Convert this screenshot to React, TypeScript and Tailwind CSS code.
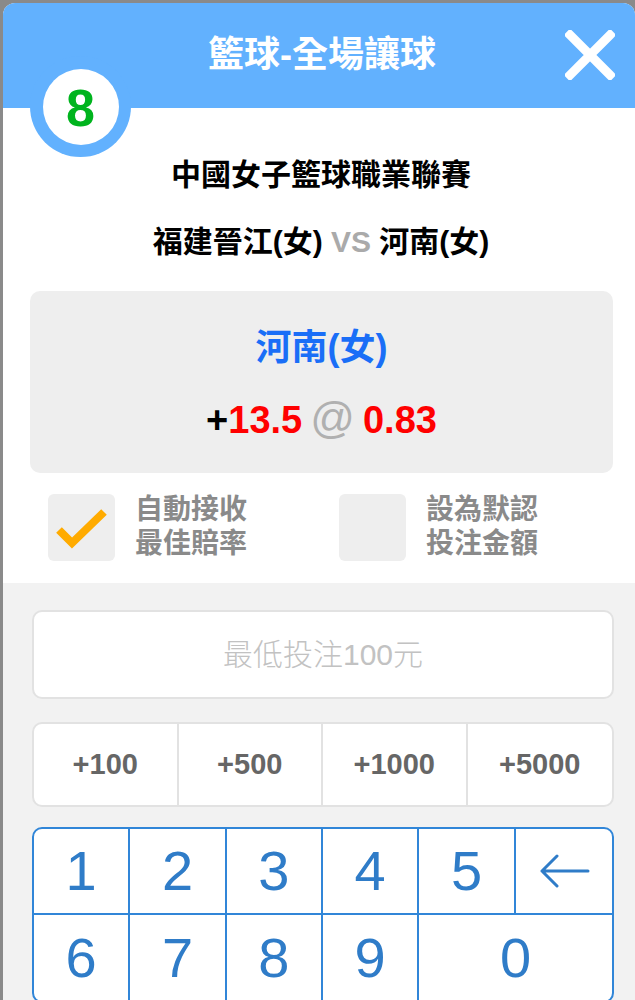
import React from "react";

const FONT = "font-['Liberation_Sans','Noto_Sans_CJK_TC',sans-serif]";

function CloseIcon() {
  return (
    <svg width="50" height="50" viewBox="0 0 50 50">
      <path d="M5 5 L45 45 M45 5 L5 45" stroke="#ffffff" strokeWidth="9" strokeLinecap="square" fill="none" />
    </svg>
  );
}

function Check() {
  return (
    <svg width="67" height="67" viewBox="0 0 67 67">
      <polyline points="11,36 24,49 56,18" stroke="#ffab00" strokeWidth="8" fill="none" strokeLinecap="butt" strokeLinejoin="miter" />
    </svg>
  );
}

function Arrow() {
  return (
    <svg width="52" height="34" viewBox="0 0 52 34">
      <path d="M4 17 H50 M19 2 L4 17 L19 32" stroke="#2f7cc8" strokeWidth="3" fill="none" strokeLinecap="round" strokeLinejoin="round" />
    </svg>
  );
}

export default function App() {
  const quick = ["+100", "+500", "+1000", "+5000"];
  return (
    <div className={`min-h-screen bg-[#8a8a8a] pl-[3px] pt-[3px] overflow-hidden ${FONT}`}>
      <div className="relative bg-white rounded-t-[12px] overflow-hidden">
        {/* Header */}
        <div className="h-[105px] bg-[#62b1fe] flex items-center justify-center pl-[6px] pb-[2px]">
          <span className="text-white text-[36px] font-bold leading-none">籃球-全場讓球</span>
        </div>
        <div className="absolute right-[20px] top-[27px]">
          <CloseIcon />
        </div>
        <div className="absolute left-[27px] top-[53px] w-[101px] h-[101px] rounded-full bg-[#62b1fe] flex items-center justify-center">
          <div className="w-[76px] h-[76px] rounded-full bg-white flex items-center justify-center">
            <span className="text-[#00b41e] text-[52px] font-bold leading-none pt-[2px]">8</span>
          </div>
        </div>

        {/* Match info */}
        <div className="pt-[49px] flex flex-col items-center pl-[4px]">
          <div className="text-[30px] leading-[36px] font-bold text-black">中國女子籃球職業聯賽</div>
          <div className="mt-[31px] text-[30px] leading-[36px] font-bold text-black">
            福建晉江(女) <span className="text-[#aaaaaa]">VS</span> 河南(女)
          </div>
        </div>

        {/* Selection box */}
        <div className="ml-[27px] w-[583px] h-[182px] mt-[31px] bg-[#eeeeee] rounded-[10px] flex flex-col items-center pt-[35px]">
          <div className="text-[36px] leading-[44px] font-bold text-[#1a6ef7]">河南(女)</div>
          <div className="mt-[26px] text-[38px] leading-[44px] font-bold flex items-baseline">
            <span className="text-black">+</span>
            <span className="text-[#ff0000]">13.5</span>
            <span className="text-[#b0b0b0] font-normal text-[44px] mx-[8px]">@</span>
            <span className="text-[#ff0000]">0.83</span>
          </div>
        </div>

        {/* Checkboxes */}
        <div className="ml-[45px] mt-[20px] pb-[22px] flex">
          <div className="w-[291px] flex items-center gap-[20px]">
            <div className="w-[67px] h-[67px] rounded-[6px] bg-[#eeeeee]">
              <Check />
            </div>
            <div className="text-[28px] leading-[34px] font-bold text-[#8a8a8a]">
              <div>自動接收</div>
              <div>最佳賠率</div>
            </div>
          </div>
          <div className="w-[291px] flex items-center gap-[20px]">
            <div className="w-[67px] h-[67px] rounded-[6px] bg-[#eeeeee]" />
            <div className="text-[28px] leading-[34px] font-bold text-[#8a8a8a]">
              <div>設為默認</div>
              <div>投注金額</div>
            </div>
          </div>
        </div>

        {/* Bottom area */}
        <div className="bg-[#f2f2f2] pt-[27px] pb-[40px] pl-[29px]">
          <div className="w-[582px] h-[89px] bg-white border-2 border-[#e2e2e2] rounded-[10px] flex items-center justify-center">
            <span className="text-[30px] font-light text-[#c2c2c2]">最低投注100元</span>
          </div>

          <div className="mt-[23px] w-[582px] h-[85px] bg-white border-2 border-[#e2e2e2] rounded-[10px] grid grid-cols-4 overflow-hidden">
            {quick.map((q, i) => (
              <div
                key={q}
                className={`flex items-center justify-center text-[29px] font-bold text-[#666666] ${i < 3 ? "border-r-2 border-[#e2e2e2]" : ""}`}
              >
                {q}
              </div>
            ))}
          </div>

          <div className="mt-[20px] w-[582px] bg-white border-2 border-[#3186d8] rounded-[10px] grid grid-cols-6 overflow-hidden">
            {["1", "2", "3", "4", "5"].map((d) => (
              <div key={d} className="h-[86px] flex items-center justify-center border-r-2 border-b-2 border-[#3186d8] text-[56px] text-[#2f7cc8] leading-none">
                {d}
              </div>
            ))}
            <div className="h-[86px] flex items-center justify-center border-b-2 border-[#3186d8]">
              <Arrow />
            </div>
            {["6", "7", "8", "9"].map((d) => (
              <div key={d} className="h-[86px] flex items-center justify-center border-r-2 border-[#3186d8] text-[56px] text-[#2f7cc8] leading-none">
                {d}
              </div>
            ))}
            <div className="col-span-2 h-[86px] flex items-center justify-center text-[56px] text-[#2f7cc8] leading-none">
              0
            </div>
          </div>
        </div>
      </div>
    </div>
  );
}
